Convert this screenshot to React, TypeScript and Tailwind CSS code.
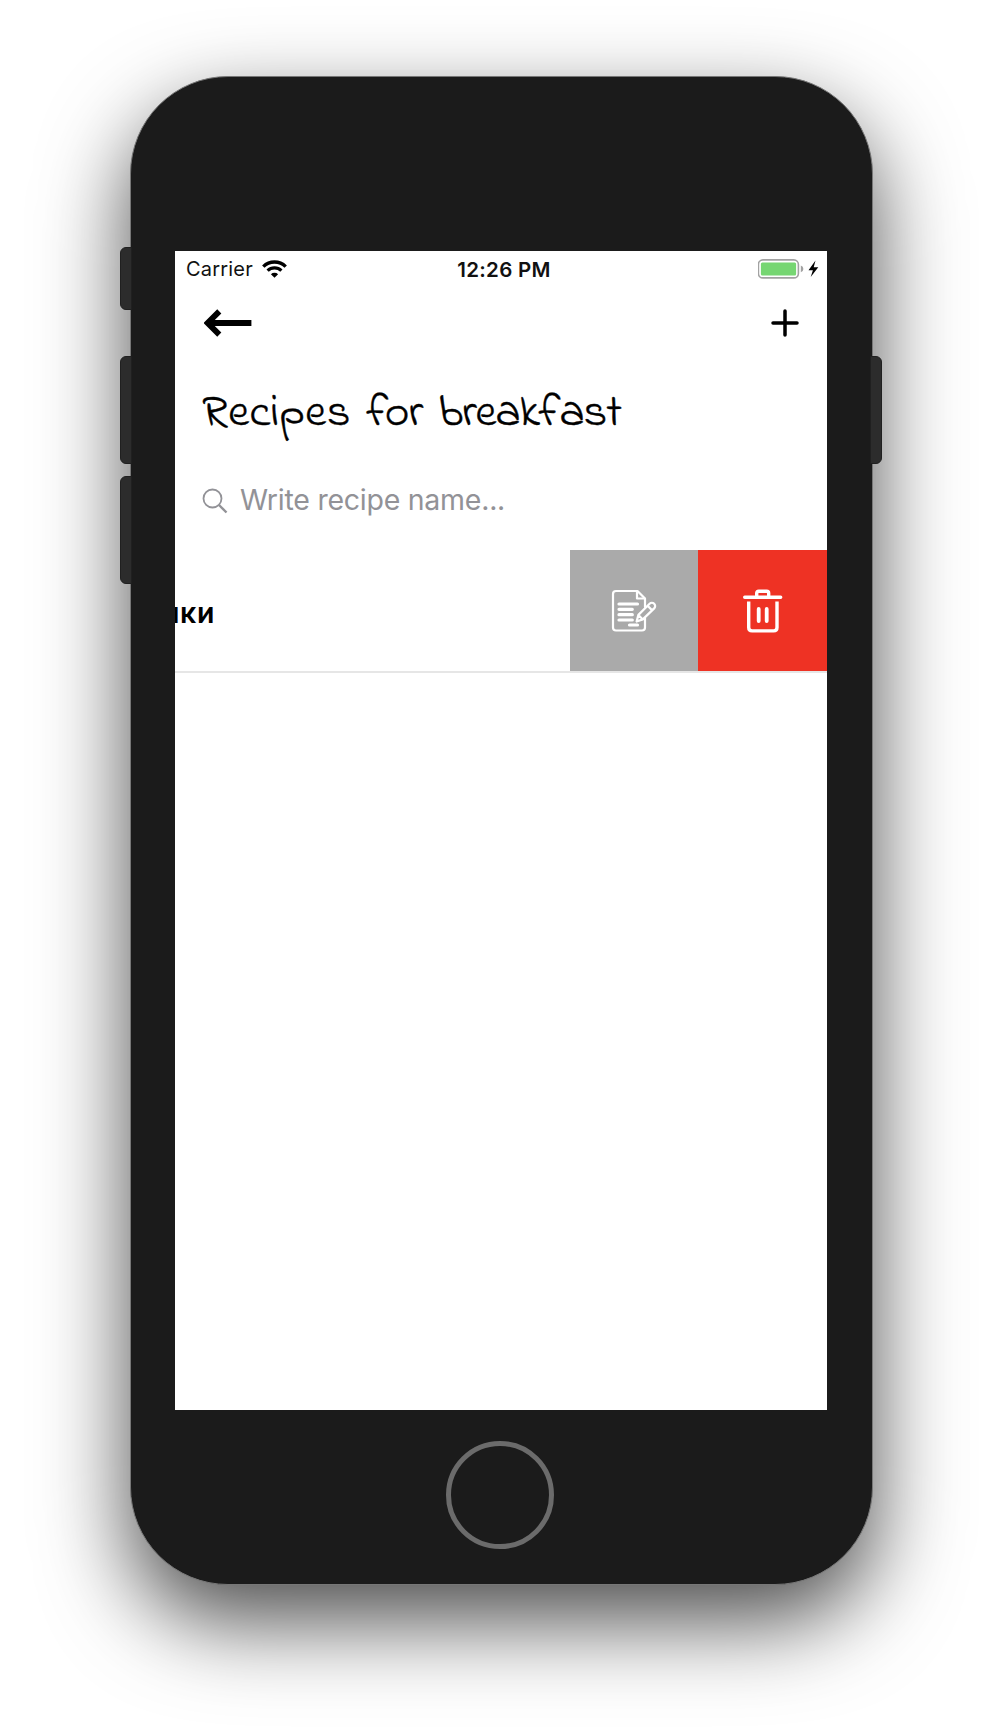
import React from "react";

function SideButton({ className }: { className: string }) {
  return <div className={`absolute w-3 bg-[#2c2c2c] border border-[#202020] ${className}`} />;
}

function StatusBar() {
  return (
    <div className="flex h-9 shrink-0 items-center justify-between pl-[11px] pr-[8px] text-[20px] leading-9 text-[#111]">
      <div className="flex w-[200px] items-center gap-[9px]">
        <span className="tracking-[0.2px]">Carrier</span>
        <svg className="h-[18px] w-[25px]" viewBox="0 0 25 18" fill="none" stroke="#000" strokeWidth="3.4">
          <path d="M1.3 6.6a16 16 0 0 1 22.4 0" />
          <path d="M5.6 10.6a9.9 9.9 0 0 1 13.8 0" strokeWidth="3.2" />
          <path d="M8.9 14.2a5.3 5.3 0 0 1 7.2 0L12.5 17.8Z" fill="#000" stroke="none" />
        </svg>
      </div>
      <span className="pl-[3px] pt-px text-[20.5px] font-semibold tracking-[0.3px]">12:26 PM</span>
      <div className="flex w-[200px] justify-end">
        <svg className="h-5 w-[61px]" viewBox="0 0 61 20">
          <rect x=".4" y=".9" width="40" height="18" rx="4.5" fill="none" stroke="#a2a2a2" strokeWidth="1.6" />
          <rect x="2.9" y="3.4" width="35.2" height="13" rx="1.5" fill="#76d672" />
          <path d="M42.800 6.500q2.600 1 2.600 3.400t-2.600 3.400Z" fill="#a2a2a2" />
          <path d="M57.500 1.500 50.500 11.200h4.400L52.700 18 60.300 8.300h-4.600Z" fill="#000" />
        </svg>
      </div>
    </div>
  );
}

function Toolbar() {
  return (
    <div className="flex h-[72px] shrink-0 items-center justify-between pl-[29px] pr-[28px]">
      <svg className="h-7 w-12" viewBox="0 0 48 28" fill="none" stroke="#000">
        <path d="M47.4 14H6" strokeWidth="5.8" />
        <path d="M15.3 2.4 3.7 14l11.6 11.6" strokeWidth="5.8" />
      </svg>
      <svg className="h-7 w-7" viewBox="0 0 28 28" stroke="#000" strokeWidth="3.5" strokeLinecap="round">
        <path d="M14 2v24M2 14h24" />
      </svg>
    </div>
  );
}

function EditIcon() {
  return (
    <svg className="h-[44px] w-[46px]" viewBox="0 0 46 44" fill="none" stroke="#fff" strokeWidth="2.2" strokeLinejoin="round" strokeLinecap="round">
      <path d="M34 29V38.5q0 3-3 3H5q-3 0-3-3V5q0-3 3-3H26.5L34 9.5V18" />
      <path d="M26 2.5V9.5H33.5" />
      <path d="M8 15h18.500M8 20.300h13.300M8 25.700h13.300M8 31h13.300M18.500 36h8" strokeWidth="3.2" />
      <path d="m25.600 32.500 1.800-6.600L38.600 14.800a3.200 3.200 0 0 1 4.600 4.600L31.800 30.400ZM27.400 25.900l4.400 4.500M36.600 16.800l4.600 4.600" />
    </svg>
  );
}

function TrashIcon() {
  return (
    <svg className="h-11 w-10" viewBox="0 0 40 44" fill="none" stroke="#fff" strokeWidth="3.4" strokeLinejoin="round" strokeLinecap="round">
      <path d="M1.700 8.300h36M13.700 8V4.300q0-2 2-2h8q2 0 2 2V8" />
      <path d="M5.700 12.500V38.500q0 3.400 3.400 3.400h21.500q3.400 0 3.400-3.400V12.500" strokeLinecap="butt" />
      <path d="M15.700 20v12M23.700 20v12" strokeWidth="3.8" />
    </svg>
  );
}

export default function App() {
  return (
    <div className="flex h-[1734px] w-[1002px] items-start justify-center overflow-hidden bg-white pt-[76px] font-['Inter',sans-serif]">
      <div className="relative flex h-[1509px] w-[743px] flex-col items-center rounded-[98px] border border-[#777] bg-[#1b1b1b] pt-[174px] shadow-[0_36px_88px_rgba(0,0,0,0.7)]">
        <SideButton className="left-[-11px] top-[170px] h-[63px] rounded-l-[6px]" />
        <SideButton className="left-[-11px] top-[279px] h-[108px] rounded-l-[6px]" />
        <SideButton className="left-[-11px] top-[399px] h-[108px] rounded-l-[6px]" />
        <SideButton className="right-[-10px] top-[279px] h-[108px] rounded-r-[6px]" />
        <main className="flex h-[1159px] w-[652px] shrink-0 flex-col overflow-hidden bg-white">
          <StatusBar />
          <Toolbar />
          <h1 className="h-[104px] shrink-0 whitespace-nowrap pl-[27px] pt-[30px] font-['Indie_Flower','Lato',cursive] text-[46.5px] font-normal leading-[50px] text-black [-webkit-text-stroke:0.4px_black]">
            <span className="mr-[4px] tracking-[0.5px]">Recipes</span>{" "}
            <span className="mr-[4px] tracking-[-0.3px]">for</span>{" "}
            <span className="tracking-[-1px]">breakfast</span>
          </h1>
          <div className="flex h-[87px] shrink-0 items-center gap-[12px] pl-[27px] pb-[12px] text-[28.5px] text-[#929297]">
            <svg className="h-[26px] w-[26px]" viewBox="0 0 26 26" fill="none" stroke="#929297" strokeWidth="1.8">
              <circle cx="10.5" cy="10.5" r="9" />
              <path d="m17 17 7.500 7.500" strokeWidth="2.4" />
            </svg>
            <span className="tracking-[-0.25px]">Write recipe name...</span>
          </div>
          <div className="flex h-[123px] shrink-0 border-b-2 border-[#e6e6e6]">
            <div className="flex flex-1 items-center overflow-hidden">
              <span className="-ml-[13px] mt-[5px] text-[28.5px] font-semibold tracking-[0.6px] text-black">ики</span>
            </div>
            <div className="flex h-[121px] w-[128px] items-center justify-center bg-[#aaa]"><EditIcon /></div>
            <div className="flex h-[121px] w-[129px] items-center justify-center bg-[#ee3224]"><TrashIcon /></div>
          </div>
        </main>
        <div className="mr-[2px] mt-[31px] h-[108px] w-[108px] shrink-0 rounded-full border-[5px] border-[#6b6b6b]" />
      </div>
    </div>
  );
}
